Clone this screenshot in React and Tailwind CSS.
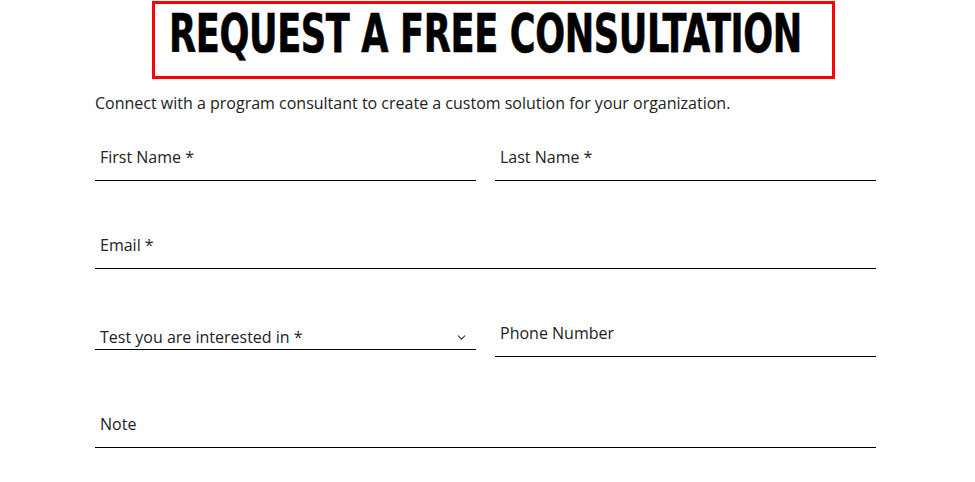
import { ChevronDown } from "lucide-react"

function Field({ label, className = "" }) {
  return (
    <div
      className={`flex h-[47px] items-center border-b border-black px-[5px] text-[16px] text-[#222] ${className}`}
    >
      {label}
    </div>
  )
}

export default function App() {
  return (
    <div className="min-h-[482px] w-[975px] bg-white font-['Open_Sans',sans-serif]">
      <div className="ml-[152px] mt-[1px] flex h-[78px] w-[683px] items-start border-[3px] border-[#ff0000] pl-[14px]">
        <h1 className="origin-left scale-x-[0.738] whitespace-nowrap font-['Liberation_Sans_Narrow','DejaVu_Sans_Condensed',sans-serif] text-[53px] font-bold leading-[60px] tracking-[-0.5px] text-black [-webkit-text-stroke:0.6px_black]">
          REQUEST A FREE CONSULTATION
        </h1>
      </div>

      <div className="ml-[95px] w-[781px]">
        <p className="mt-[12px] text-[16px] leading-[24px] text-[#222]">
          Connect with a program consultant to create a custom solution for your organization.
        </p>

        <div className="mt-[19px] grid grid-cols-2 gap-x-[19px]">
          <Field label="First Name *" />
          <Field label="Last Name *" />
        </div>

        <Field label="Email *" className="mt-[41px]" />

        <div className="mt-[41px] grid grid-cols-2 items-start gap-x-[19px]">
          <div className="mt-[15px] flex h-[25px] items-center justify-between border-b border-black pl-[5px] pr-[8px] text-[16px] text-[#222]">
            <span>Test you are interested in *</span>
            <ChevronDown size={13} strokeWidth={2} className="text-[#333]" />
          </div>
          <Field label="Phone Number" />
        </div>

        <Field label="Note" className="mt-[44px]" />
      </div>
    </div>
  )
}
